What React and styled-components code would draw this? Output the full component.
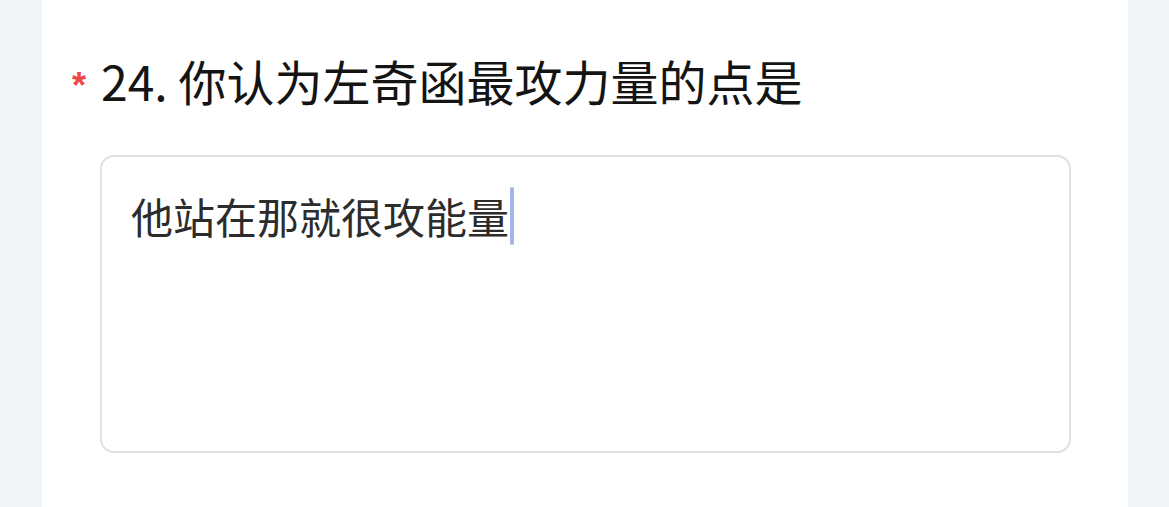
import React from "react";
import styled, { createGlobalStyle } from "styled-components";

const Global = createGlobalStyle`
  html, body {
    margin: 0;
    padding: 0;
    background: #f3f6f9;
    height: 100%;
  }
  #root { height: 100%; }
`;

const Page = styled.div`
  display: flex;
  justify-content: flex-start;
  height: 507px;
  padding-left: 42px;
  background: #f3f6f9;
  font-family: "Noto Sans CJK SC", "Noto Sans", sans-serif;
`;

const Card = styled.section`
  width: 1086px;
  background: #ffffff;
  padding: 50px 57px 0 30px;
  box-sizing: border-box;
  display: flex;
  flex-direction: column;
  gap: 45px;
`;

const TitleRow = styled.div`
  display: flex;
  align-items: flex-start;
  height: 60px;
`;

const Required = styled.span`
  width: 29px;
  flex: none;
  margin-top: 18px;
  color: #f04646;
  font-family: "Liberation Sans", sans-serif;
  font-weight: 700;
  font-size: 36px;
  line-height: 36px;
  height: 36px;
`;

const Title = styled.h2`
  margin: 0;
  font-weight: 400;
  font-size: 48px;
  line-height: 60px;
  color: #141414;
  white-space: nowrap;
`;

const Answer = styled.div`
  margin-left: 28px;
  height: 298px;
  box-sizing: border-box;
  border: 2px solid #e0e0e0;
  border-radius: 14px;
  padding: 30px 29px;
  background: #fff;
`;

const AnswerText = styled.div`
  font-size: 42px;
  line-height: 58px;
  color: #2c2c2c;
  display: flex;
  align-items: stretch;
`;

const Caret = styled.span`
  display: inline-block;
  width: 4px;
  border-radius: 2px;
  background: #a3b6ea;
  margin-left: 1px;
`;

export default function App() {
  return (
    <>
      <Global />
      <Page>
        <Card>
          <TitleRow>
            <Required>*</Required>
            <Title>24. 你认为左奇函最攻力量的点是</Title>
          </TitleRow>
          <Answer>
            <AnswerText>
              <span>他站在那就很攻能量</span>
              <Caret />
            </AnswerText>
          </Answer>
        </Card>
      </Page>
    </>
  );
}
